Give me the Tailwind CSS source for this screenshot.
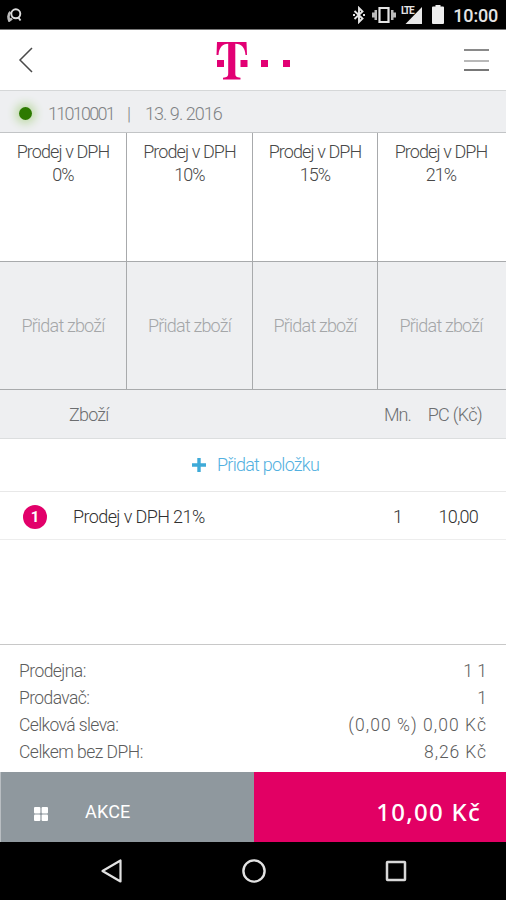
<!DOCTYPE html>
<html lang="cs">
<head>
<meta charset="utf-8">
<title>Pokladna</title>
<script src="https://cdn.jsdelivr.net/npm/@tailwindcss/browser@4"></script>
</head>
<body class="bg-white">
<div class="w-[506px] h-[900px] flex flex-col overflow-hidden bg-white font-[Roboto,sans-serif] font-light text-[18px] leading-[23px] text-[#484848]">
  <div class="h-[30px] shrink-0 bg-black border-b border-[#777] flex items-center pl-[7px] pr-2 text-[#e4e4e4]">
    <svg class="w-[15px] h-[14px]" viewBox="0 0 15 14" fill="none" stroke="#ddd"><path d="M3.500 4C1 6 1 9 2.300 12.500L5 10.500" stroke="#bbb" stroke-width="2.600"/><circle cx="8.800" cy="5.800" r="4.500" stroke-width="1.900"/><path d="M11 9l2.500 3.500" stroke-width="1.900"/></svg>
    <svg class="w-[12px] h-[18px] ml-[331px]" viewBox="0 0 12 18" fill="none" stroke="#e4e4e4" stroke-width="1.900"><path d="M1.500 5l8 7.500L6 16V2l3.500 3.500-8 7.500M0 9h2M10 9h2"/></svg>
    <svg class="w-[24px] h-[18px] ml-[7px]" viewBox="0 0 24 18"><path d="M7.500 2h9v14h-9z" fill="none" stroke="#e4e4e4" stroke-width="2.200"/><path d="M5 4v10H2.500v-2.500H0v-5h2.500V4zM19 4v10h2.500v-2.500H24v-5h-2.500V4z" fill="#bbb"/></svg>
    <div class="relative ml-[4px] w-[23px] h-[20px]">
      <svg class="w-full h-full" viewBox="0 0 23 20"><path d="M5.500 19L22 2v17z" fill="#e8e8e8"/><path d="M0 0h12v9.500H0z" fill="#000"/></svg>
      <span class="absolute left-[1px] top-[1px] text-[10px] leading-[9px] font-bold tracking-[-1.300px]">LTE</span>
    </div>
    <svg class="w-[12px] h-[19px] ml-[9px]" viewBox="0 0 12 19"><path d="M3.500 0h5v1.500H11q1 0 1 1V18q0 1-1 1H1q-1 0-1-1V2.500q0-1 1-1h2.500z" fill="#eee"/></svg>
    <span class="ml-auto text-[18px] font-medium tracking-[-0.200px] pt-[2px]">10:00</span>
  </div>

  <div class="h-[61px] shrink-0 border-b border-[#d5d7d8] flex items-center justify-between pl-[18px] pr-[17px]">
    <svg class="w-[16px] h-[26px]" viewBox="0 0 16 26" fill="none" stroke="#4a4a4a" stroke-width="1.500"><path d="M14 1L2 13l12 12"/></svg>
    <svg class="w-[76px] h-[38px] ml-[10px] mt-[2px]" viewBox="0 0 76 38" fill="#e20074"><path d="M1 0h29.500l.5 13h-1.500C29 6 26 2 19.300 1.800V31c0 3.500 1 4.500 5.200 4.700V37.500H7V35.700c4.200-.2 5.200-1.200 5.200-4.700V1.800C6 2 3 6 2.500 13H.5zM1 18h7v7H1zM24.500 18h7v7h-7zM45 18h7v7h-7zM67 18h7v7h-7z"/></svg>
    <svg class="w-[25px] h-[24px]" viewBox="0 0 25 24" shape-rendering="crispEdges"><path d="M0 1h25v2H0z" fill="#8a8a8a"/><path d="M0 12h25v2H0z" fill="#b8b8b8"/><path d="M0 21h25v2H0z" fill="#777"/></svg>
  </div>

  <div class="h-[42px] shrink-0 border-b border-[#c2c4c6] bg-[#eeeff1] flex items-center pl-[19px] text-[#808284] pt-[3px]">
    <i class="w-[13px] h-[13px] rounded-full bg-[#2d7a00] shadow-[0_0_8px_4px_#c3dcae]"></i>
    <span class="ml-[16px] w-[66px] whitespace-nowrap tracking-[-1.750px]">11010001</span>
    <span class="ml-[13px]">|</span>
    <span class="ml-[14px] tracking-[-0.950px]">13. 9. 2016</span>
  </div>

  <div class="h-[257px] shrink-0 grid grid-cols-[127px_126px_125px_128px] grid-rows-[129px_128px] text-center tracking-[-0.900px]">
    <div class="border-r border-b border-[#a8aaac] pt-[7px]">Prodej v DPH<br>0%</div>
    <div class="border-r border-b border-[#a8aaac] pt-[7px]">Prodej v DPH<br>10%</div>
    <div class="border-r border-b border-[#a8aaac] pt-[7px]">Prodej v DPH<br>15%</div>
    <div class="border-b border-[#a8aaac] pt-[7px] pr-[2px]">Prodej v DPH<br>21%</div>
    <div class="border-r border-b border-[#a8aaac] bg-[#eeeff1] flex items-center justify-center text-[#a4a6a8] tracking-[-0.800px]">Přidat zboží</div>
    <div class="border-r border-b border-[#a8aaac] bg-[#eeeff1] flex items-center justify-center text-[#a4a6a8] tracking-[-0.800px]">Přidat zboží</div>
    <div class="border-r border-b border-[#a8aaac] bg-[#eeeff1] flex items-center justify-center text-[#a4a6a8] tracking-[-0.800px]">Přidat zboží</div>
    <div class="border-b border-[#a8aaac] bg-[#eeeff1] flex items-center justify-center pr-[2px] text-[#a4a6a8] tracking-[-0.800px]">Přidat zboží</div>
  </div>

  <div class="h-[49px] shrink-0 bg-[#eeeff1] border-b border-[#dcdedf] flex items-center pl-[69px] pr-[24px] text-[#6c6e70]">
    <span class="tracking-[-0.800px]">Zboží</span>
    <span class="ml-auto tracking-[-1px]">Mn.</span>
    <span class="ml-[17px] tracking-[-0.700px]">PC (Kč)</span>
  </div>
  <div class="h-[53px] shrink-0 border-b border-[#e8e8e8] flex items-center pl-[192px] text-[#52b0e0]">
    <svg class="w-[14px] h-[14px]" viewBox="0 0 14 14"><path d="M5.300 0h3.400v5.300H14v3.400H8.700V14H5.300V8.700H0V5.300h5.300z" fill="#3eaad8"/></svg>
    <span class="ml-[11px] -mt-px tracking-[-0.750px]">Přidat položku</span>
  </div>
  <div class="h-[48px] shrink-0 border-b border-[#ededed] flex items-center pl-[23px] pr-[28px] text-[#303030]">
    <span class="w-[24px] h-[24px] mt-[2px] rounded-full bg-[#e2006a] text-white font-bold text-[15px] leading-[24px] text-center">1</span>
    <span class="ml-[26px] pt-px tracking-[-0.600px]">Prodej v DPH 21%</span>
    <span class="ml-auto pt-px">1</span>
    <span class="w-[75px] pt-px text-right tracking-[-0.800px]">10,00</span>
  </div>
  <div class="grow"></div>

  <div class="h-[128px] shrink-0 border-t border-[#c8c8c8] pl-[19px] pr-[19px] pt-[13px] leading-[27px] text-[17.500px] text-[#5c5c5c]">
    <div class="flex justify-between"><span class="tracking-[-0.550px]">Prodejna:</span><span>1 1</span></div>
    <div class="flex justify-between"><span class="tracking-[-0.600px]">Prodavač:</span><span>1</span></div>
    <div class="flex justify-between"><span class="tracking-[-0.600px]">Celková sleva:</span><span class="tracking-[1.050px]">(0,00 %) 0,00 Kč</span></div>
    <div class="flex justify-between"><span class="tracking-[-0.500px]">Celkem bez DPH:</span><span class="tracking-[0.900px]">8,26 Kč</span></div>
  </div>

  <div class="h-[70px] shrink-0 flex text-white">
    <div class="w-[254px] bg-[#8f989e] border-l border-[#b9bec2] flex items-center pl-[33px] pt-[9px]">
      <svg class="w-[14px] h-[14px] mt-[4px]" viewBox="0 0 14 14" fill="#fff"><rect width="6.400" height="6.400" rx="1"/><rect x="7.600" width="6.400" height="6.400" rx="1"/><rect y="7.600" width="6.400" height="6.400" rx="1"/><rect x="7.600" y="7.600" width="6.400" height="6.400" rx="1"/></svg>
      <span class="ml-[37px] text-[18px] font-normal tracking-[0.200px]">AKCE</span>
    </div>
    <div class="grow bg-[#e20064] flex items-center justify-end pr-[25px] pt-[9px]">
      <span class="font-[Noto_Sans,sans-serif] font-medium text-[24px] tracking-[1.250px]">10,00 Kč</span>
    </div>
  </div>

  <div class="h-[58px] shrink-0 bg-black flex items-center justify-between pl-[100px] pr-[99px]">
    <svg class="w-[23px] h-[26px]" viewBox="0 0 23 26" fill="none" stroke="#e2e2e2" stroke-width="2.200" stroke-linejoin="round"><path d="M20.500 2.500v21L2.500 13z"/></svg>
    <svg class="w-[26px] h-[26px] -ml-px" viewBox="0 0 26 26" fill="none" stroke="#e2e2e2" stroke-width="2.400"><circle cx="13" cy="13" r="10.600"/></svg>
    <svg class="w-[22px] h-[22px]" viewBox="0 0 22 22" fill="none" stroke="#d8d8d8" stroke-width="2.500"><rect x="2" y="2" width="18" height="18" rx=".5"/></svg>
  </div>
</div>
</body>
</html>
